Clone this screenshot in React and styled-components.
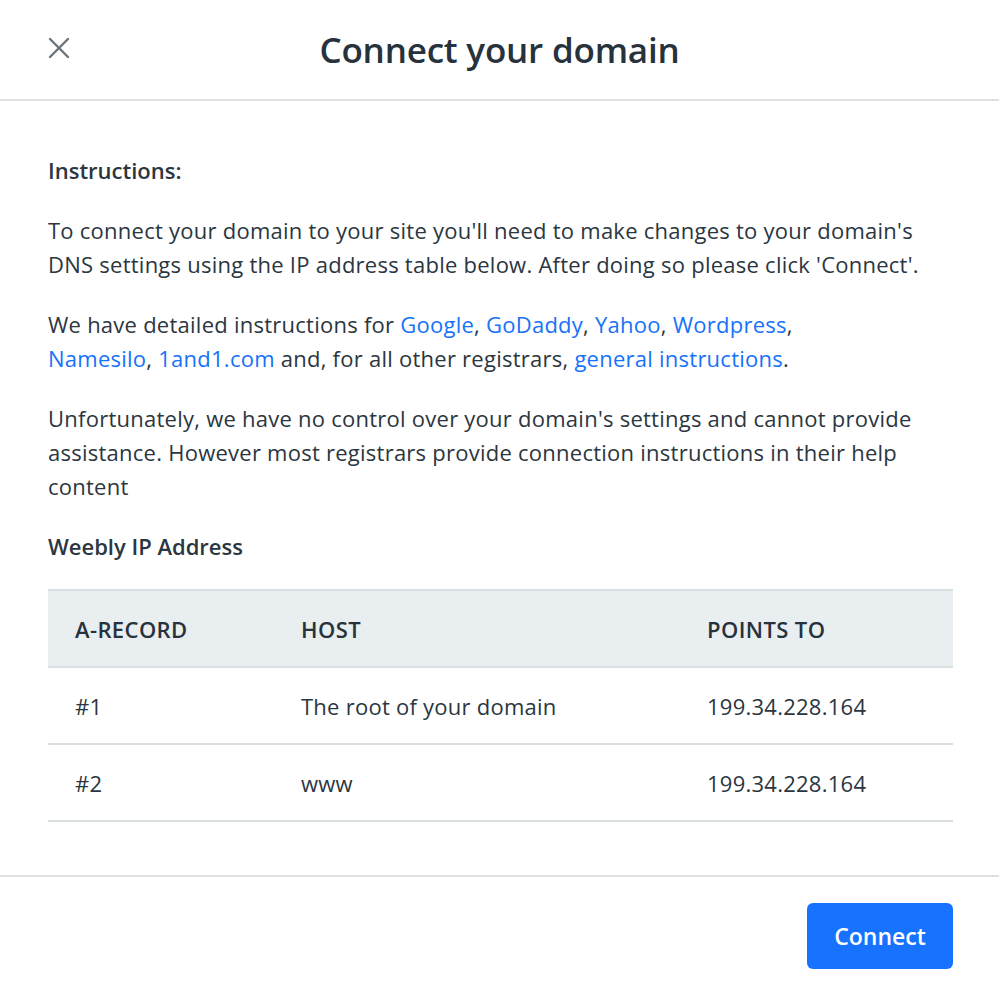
import React from "react";
import styled, { createGlobalStyle } from "styled-components";

const GlobalStyle = createGlobalStyle`
  html, body {
    margin: 0;
    padding: 0;
    background: #ffffff;
  }
  body {
    font-family: "Open Sans", "Liberation Sans", sans-serif;
    color: #2b3640;
  }
`;

const links = ["Google", "GoDaddy", "Yahoo", "Wordpress"];

const rows = [
  { record: "#1", host: "The root of your domain", points: "199.34.228.164" },
  { record: "#2", host: "www", points: "199.34.228.164" },
];

const App = () => {
  return (
    <>
      <GlobalStyle />
      <Modal>
        <Header>
          <Close aria-label="Close">
            <svg width="22" height="22" viewBox="0 0 22 22">
              <path
                d="M2 2 L20 20 M20 2 L2 20"
                stroke="#6b747c"
                strokeWidth="2.4"
                strokeLinecap="round"
              />
            </svg>
          </Close>
          <Title>Connect your domain</Title>
        </Header>

        <Body>
          <Label>Instructions:</Label>
          <Para>
            To connect your domain to your site you'll need to make changes to
            your domain's DNS settings using the IP address table below. After
            doing so please click 'Connect'.
          </Para>
          <Para>
            We have detailed instructions for{" "}
            {links.map((l, i) => (
              <React.Fragment key={l}>
                <Link href="#">{l}</Link>
                {i < links.length - 1 ? ", " : ","}
              </React.Fragment>
            ))}
            <br />
            <Link href="#">Namesilo</Link>, <Link href="#">1and1.com</Link>{" "}
            and, for all other registrars,{" "}
            <Link href="#">general instructions</Link>.
          </Para>
          <Para>
            Unfortunately, we have no control over your domain's settings and
            cannot provide assistance. However most registrars provide
            connection instructions in their help content
          </Para>

          <Label>Weebly IP Address</Label>
          <Table>
            <colgroup>
              <col width="226" />
              <col width="406" />
              <col />
            </colgroup>
            <thead>
              <tr>
                <Th>A-RECORD</Th>
                <Th>HOST</Th>
                <Th>POINTS TO</Th>
              </tr>
            </thead>
            <tbody>
              {rows.map((r) => (
                <tr key={r.record}>
                  <Td>{r.record}</Td>
                  <Td>{r.host}</Td>
                  <Td>{r.points}</Td>
                </tr>
              ))}
            </tbody>
          </Table>
        </Body>

        <Footer>
          <Button>Connect</Button>
        </Footer>
      </Modal>
    </>
  );
};

export default App;

const Modal = styled.div`
  width: 999px;
  min-height: 990px;
  display: flex;
  flex-direction: column;
  background: #fff;
`;

const Header = styled.div`
  position: relative;
  height: 99px;
  display: flex;
  align-items: center;
  justify-content: center;
  border-bottom: 2px solid #dde1e4;
`;

const Close = styled.button`
  position: absolute;
  left: 48px;
  top: 37px;
  width: 22px;
  height: 22px;
  padding: 0;
  border: none;
  background: none;
  cursor: pointer;
  display: flex;
`;

const Title = styled.h1`
  margin: 0;
  font-size: 35px;
  font-weight: 600;
  color: #27323c;
  letter-spacing: -0.2px;
`;

const Body = styled.div`
  padding: 52px 46px 53px 48px;
  border-bottom: 2px solid #dde1e4;
`;

const Label = styled.div`
  font-size: 22px;
  font-weight: 600;
  line-height: 34px;
  color: #2b3640;
  margin-bottom: 26px;
`;

const Para = styled.p`
  margin: 0 0 26px;
  font-size: 22px;
  letter-spacing: 0.25px;
  line-height: 34px;
  color: #2b3640;
`;

const Link = styled.a`
  color: #1672f9;
  text-decoration: none;
`;

const Table = styled.table`
  width: 100%;
  table-layout: fixed;
  border-collapse: collapse;
  margin-top: 4px;
  border-top: 2px solid #d9dee1;
`;

const Th = styled.th`
  text-align: left;
  background: #e9eef0;
  height: 75px;
  padding: 0 0 0 27px;
  font-size: 22px;
  font-weight: 600;
  letter-spacing: 0.4px;
  color: #27323c;
  border-bottom: 2px solid #d9dee1;
`;

const Td = styled.td`
  height: 75px;
  padding: 0 0 0 27px;
  font-size: 22px;
  letter-spacing: 0.25px;
  color: #2b3640;
  border-bottom: 2px solid #d9dee1;
`;

const Footer = styled.div`
  display: flex;
  justify-content: flex-end;
  padding: 26px 46px 0 0;
`;

const Button = styled.button`
  width: 146px;
  height: 66px;
  border: none;
  border-radius: 6px;
  background: #1672ff;
  color: #fff;
  font-family: "Open Sans", "Liberation Sans", sans-serif;
  font-size: 23px;
  font-weight: 600;
  cursor: pointer;
`;
